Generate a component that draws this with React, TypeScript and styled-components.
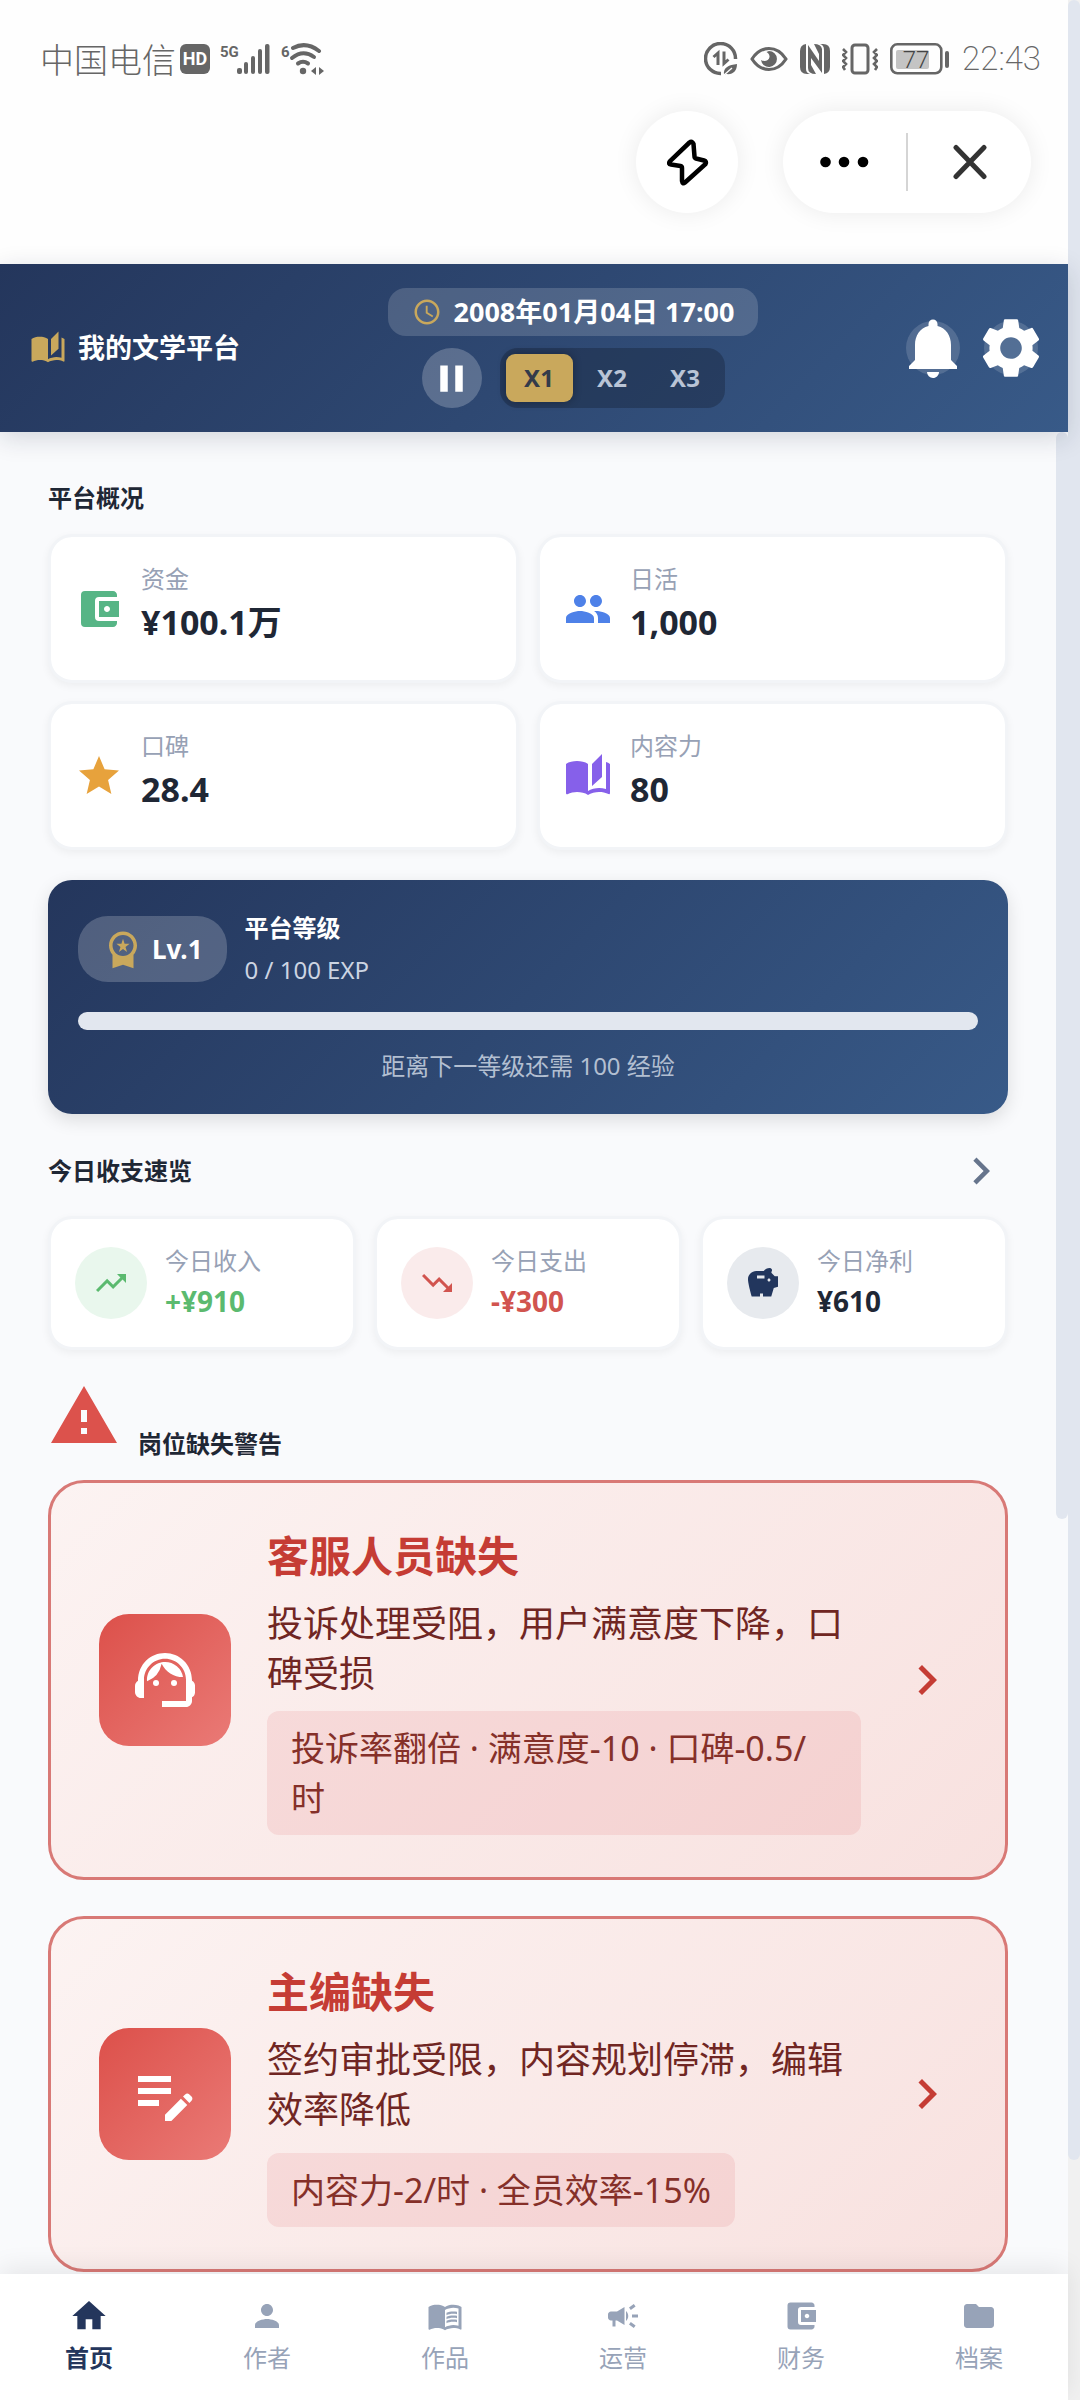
import React, { useState } from "react";
import styled, { createGlobalStyle, css } from "styled-components";
import type { IconType } from "react-icons";
import {
  MdAccountBalanceWallet,
  MdAutoStories,
  MdCampaign,
  MdChevronRight,
  MdEditNote,
  MdFolder,
  MdHome,
  MdMenuBook,
  MdNotifications,
  MdPause,
  MdPeople,
  MdPerson,
  MdPlayArrow,
  MdSavings,
  MdSchedule,
  MdSettings,
  MdStar,
  MdSupportAgent,
  MdTrendingDown,
  MdTrendingUp,
  MdWarning,
  MdWorkspacePremium,
} from "react-icons/md";

const color = {
  navy: "#24365c",
  ink: "#1f2735",
  muted: "#97a1b5",
  gold: "#c9a85c",
  page: "#f9fafc",
  thumb: "#e1e6ef",
  system: "#666666",
  danger: "#c53c34",
};

const navyGradient = "linear-gradient(135deg, #24365c 0%, #385a88 100%)";

const GlobalStyle = createGlobalStyle`
  *, *::before, *::after { box-sizing: border-box; }
  body {
    margin: 0;
    background: ${color.page};
    color: ${color.ink};
    font-family: "Noto Sans", "Noto Sans CJK SC", sans-serif;
    font-size: 24px;
    line-height: 36px;
  }
  h1, h2, h3, p, ul { margin: 0; padding: 0; }
  ul { list-style: none; }
  button { font: inherit; color: inherit; border: 0; padding: 0; background: none; cursor: pointer; }
  svg { display: block; flex: none; }
`;

/* ---------- shell ---------- */

const Shell = styled.div`
  display: flex;
  min-height: 100vh;
`;

const Screen = styled.div`
  flex: 1;
  min-width: 0;
  display: flex;
  flex-direction: column;
`;

const Rail = styled.div<{ $track: string }>`
  flex: none;
  width: 12px;
  background: ${(p) => p.$track};
`;

const Thumb = styled.div<{ $share: number }>`
  height: ${(p) => p.$share}%;
  border-radius: 6px;
  background: ${color.thumb};
`;

/* ---------- system area ---------- */

const SystemArea = styled.div`
  background: #fefefe;
  padding: 42px 0 51px;
`;

const StatusBar = styled.div`
  display: flex;
  justify-content: space-between;
  height: 34px;
  padding: 0 27px 0 40px;
  color: ${color.system};
`;

const StatusGroup = styled.div<{ $gap: number }>`
  display: flex;
  align-items: center;
  gap: ${(p) => p.$gap}px;
`;

const Carrier = styled.span`
  font-family: "Noto Sans CJK SC", sans-serif;
  font-weight: 300;
  font-size: 34px;
  line-height: 34px;
`;

const CarrierGroup = styled.div`
  display: flex;
  align-items: center;
  gap: 4px;
`;

const HdBadge = styled.span`
  width: 30px;
  height: 30px;
  border-radius: 6px;
  background: ${color.system};
  color: #fff;
  font: 700 18px/30px Roboto, sans-serif;
  text-align: center;
`;

const Clock = styled.span`
  font: 200 33px/34px Roboto, sans-serif;
`;

const CapsuleRow = styled.div`
  display: flex;
  justify-content: flex-end;
  gap: 45px;
  margin-top: 35px;
  padding: 0 37px;
`;

const capsule = css`
  height: 102px;
  border-radius: 51px;
  background: #fff;
  box-shadow: 0 0 24px rgba(0, 0, 0, 0.08);
`;

const RoundCapsule = styled.button`
  ${capsule}
  width: 102px;
  display: grid;
  place-items: center;
`;

const WideCapsule = styled.div`
  ${capsule}
  display: flex;
  align-items: center;
`;

const CapsuleButton = styled.button`
  width: 123px;
  height: 102px;
  display: grid;
  place-items: center;
`;

const CapsuleDivider = styled.span`
  width: 2px;
  height: 58px;
  background: #d5d5d5;
`;

/* ---------- app header ---------- */

const Header = styled.header`
  position: relative;
  z-index: 1;
  display: flex;
  align-items: center;
  justify-content: space-between;
  padding: 24px 30px;
  background: ${navyGradient};
  box-shadow: 0 6px 24px rgba(20, 30, 55, 0.16);
  color: #fff;
`;

const Brand = styled.div`
  display: flex;
  align-items: center;
  gap: 12px;
  svg { color: ${color.gold}; }
`;

const BrandName = styled.h1`
  font-size: 27px;
  line-height: 36px;
  font-weight: 700;
`;

const TimeColumn = styled.div`
  display: flex;
  flex-direction: column;
  align-items: center;
  gap: 12px;
`;

const DatePill = styled.div`
  display: flex;
  align-items: center;
  gap: 12px;
  height: 48px;
  padding: 0 24px;
  border-radius: 18px;
  background: rgba(255, 255, 255, 0.16);
  font-size: 27px;
  font-weight: 700;
  svg { color: ${color.gold}; }
`;

const Controls = styled.div`
  display: flex;
  gap: 18px;
`;

const PauseButton = styled.button`
  width: 60px;
  height: 60px;
  border-radius: 50%;
  background: rgba(255, 255, 255, 0.22);
  display: grid;
  place-items: center;
`;

const SpeedGroup = styled.div`
  display: flex;
  gap: 6px;
  padding: 6px;
  border-radius: 18px;
  background: rgba(20, 30, 50, 0.36);
`;

const SpeedButton = styled.button<{ $active: boolean }>`
  width: 67px;
  height: 48px;
  border-radius: 9px;
  font-weight: 700;
  color: ${(p) => (p.$active ? "#333b4a" : "#b9c4d6")};
  background: ${(p) => (p.$active ? color.gold : "transparent")};
  box-shadow: ${(p) => (p.$active ? "0 0 8px rgba(0, 0, 0, 0.3)" : "none")};
`;

const HeaderActions = styled.div`
  display: flex;
  gap: 24px;
`;

const ActionButton = styled.button`
  width: 54px;
  height: 54px;
  border-radius: 50%;
  background: rgba(255, 255, 255, 0.15);
  display: flex;
  align-items: center;
  justify-content: center;
`;

/* ---------- dashboard ---------- */

const Body = styled.div`
  flex: 1;
  display: flex;
`;

const Main = styled.main`
  flex: 1;
  min-width: 0;
  display: flex;
  flex-direction: column;
  gap: 30px;
  padding: 48px 48px 0;
`;

const Section = styled.section`
  display: flex;
  flex-direction: column;
  gap: 18px;
`;

const SectionHead = styled.div`
  display: flex;
  align-items: center;
  justify-content: space-between;
`;

const SectionTitle = styled.h2`
  font-size: 24px;
  line-height: 36px;
  font-weight: 700;
`;

const WarningHead = styled.div`
  display: flex;
  align-items: flex-end;
  gap: 18px;
  svg { color: #dc524c; margin-bottom: 10px; }
`;

const MoreButton = styled.button`
  color: #66748c;
`;

const CardGrid = styled.div<{ $columns: number }>`
  display: grid;
  grid-template-columns: repeat(${(p) => p.$columns}, minmax(0, 1fr));
  gap: 18px;
`;

const Card = styled.div`
  display: flex;
  align-items: center;
  gap: 18px;
  padding: 24px;
  border: 3px solid #f2f4f7;
  border-radius: 24px;
  background: #fff;
  background-clip: padding-box;
  box-shadow: 0 3px 9px rgba(0, 0, 0, 0.05);
`;

const StatIcon = styled.span<{ $color: string }>`
  color: ${(p) => p.$color};
`;

const StatText = styled.div`
  padding-bottom: 9px;
`;

const Label = styled.p`
  color: ${color.muted};
`;

const StatValue = styled.p`
  font-size: 34px;
  line-height: 50px;
  font-weight: 700;
`;

const FlowIcon = styled.span<{ $color: string; $bg: string }>`
  flex: none;
  width: 72px;
  height: 72px;
  border-radius: 50%;
  display: grid;
  place-items: center;
  color: ${(p) => p.$color};
  background: ${(p) => p.$bg};
`;

const FlowValue = styled.p<{ $color: string }>`
  font-size: 28px;
  line-height: 44px;
  font-weight: 700;
  color: ${(p) => p.$color};
`;

const LevelCard = styled.section`
  padding: 30px;
  border-radius: 24px;
  background: ${navyGradient};
  box-shadow: 0 6px 18px rgba(0, 0, 0, 0.12);
  color: #fff;
`;

const LevelTop = styled.div`
  display: flex;
  align-items: center;
  gap: 18px;
`;

const LevelBadge = styled.div`
  display: flex;
  align-items: center;
  gap: 8px;
  height: 66px;
  padding: 0 24px;
  border-radius: 30px;
  background: rgba(255, 255, 255, 0.2);
  font-size: 26px;
  font-weight: 700;
  svg { color: ${color.gold}; }
`;

const LevelInfo = styled.div`
  display: flex;
  flex-direction: column;
  gap: 6px;
`;

const Exp = styled.p`
  color: #ccd4e2;
`;

const ProgressTrack = styled.div`
  height: 18px;
  margin: 24px 0 18px;
  border-radius: 9px;
  background: #e2e7ef;
  overflow: hidden;
`;

const ProgressFill = styled.div`
  height: 100%;
  background: ${color.gold};
`;

const LevelHint = styled.p`
  text-align: center;
  color: #b3bfd1;
`;

/* ---------- alerts ---------- */

const AlertList = styled.div`
  display: flex;
  flex-direction: column;
  gap: 36px;
`;

const Alert = styled.article`
  display: flex;
  align-items: center;
  gap: 36px;
  padding: 48px;
  border: 3px solid #d87976;
  border-radius: 36px;
  background: linear-gradient(135deg, #fcf3f2 0%, #f8e1df 100%);
`;

const AlertTile = styled.span`
  flex: none;
  width: 132px;
  height: 132px;
  border-radius: 30px;
  background: linear-gradient(135deg, #dc504a 0%, #ea7a76 100%);
  color: #fff;
  display: grid;
  place-items: center;
`;

const AlertText = styled.div`
  flex: 1;
  min-width: 0;
  margin-bottom: -6px;
`;

const AlertTitle = styled.h3`
  font-size: 42px;
  line-height: 50px;
  font-weight: 700;
  color: ${color.danger};
  margin-bottom: 18px;
`;

const AlertDescription = styled.p`
  font-size: 36px;
  line-height: 50px;
  color: #702623;
`;

const AlertEffect = styled.p<{ $gap: number }>`
  width: fit-content;
  margin-top: ${(p) => p.$gap}px;
  padding: 12px 24px;
  border-radius: 12px;
  background: rgba(220, 80, 90, 0.12);
  font-size: 34px;
  line-height: 50px;
  color: #853029;
`;

const AlertMore = styled.button`
  color: ${color.danger};
`;

/* ---------- bottom navigation ---------- */

const BottomNav = styled.nav`
  position: relative;
  z-index: 1;
  background: #fff;
  box-shadow: 0 -6px 24px rgba(0, 0, 0, 0.08);
`;

const NavList = styled.ul`
  display: grid;
  grid-template-columns: repeat(6, 1fr);
`;

const NavLink = styled.a<{ $active: boolean }>`
  display: flex;
  flex-direction: column;
  align-items: center;
  gap: 6px;
  padding: 24px 0;
  text-decoration: none;
  color: ${(p) => (p.$active ? color.navy : "#97a3b8")};
  font-weight: ${(p) => (p.$active ? 700 : 400)};
`;

const NavIcon = styled.span`
  height: 36px;
  display: flex;
  align-items: center;
`;

/* ---------- drawings ---------- */

const CellularIcon = () => (
  <svg width="50" height="32" viewBox="0 0 50 32" fill="currentColor">
    <text x="0" y="14" fontFamily="Roboto, sans-serif" fontWeight="700" fontSize="15">5G</text>
    <rect x="17" y="25" width="5" height="6" rx="2" />
    <rect x="24" y="19" width="4" height="12" rx="2" />
    <rect x="31" y="13" width="4" height="18" rx="2" />
    <rect x="38" y="6" width="4" height="25" rx="2" />
    <rect x="45" y="1" width="4.5" height="30" rx="2" />
  </svg>
);

const WifiIcon = () => (
  <svg width="46" height="34" viewBox="0 0 46 34" fill="none" stroke="currentColor" strokeWidth="4" strokeLinecap="round">
    <text x="1" y="15" fontFamily="Roboto, sans-serif" fontWeight="700" fontSize="15" fill="currentColor" stroke="none">6</text>
    <path d="M13 6 Q26 -1 39 9" />
    <path d="M12 16 Q23 7 34 15" />
    <path d="M18 21.500 Q23 18 28 21.500" />
    <circle cx="23" cy="29" r="3.200" fill="currentColor" stroke="none" />
    <path d="M36 25v8l-5-4zM39 25v8l5-4z" fill="currentColor" stroke="none" />
  </svg>
);

const DataSaverIcon = () => (
  <svg width="34" height="34" viewBox="0 0 34 34" fill="none" stroke="currentColor" strokeWidth="3.500">
    <path d="M17 31.500A15 15 0 1 1 31.500 17" />
    <path d="M9.500 15l4.500-4v12M20 9.500v12l4.500-4" strokeWidth="3" />
    <path d="M20 33c-1-8 5-10 13-11 0 7-4 11-11 10z" fill="currentColor" stroke="none" />
    <path d="M20 33l8-7" stroke="#fff" strokeWidth="1.300" />
  </svg>
);

const EyeIcon = () => (
  <svg width="38" height="26" viewBox="0 0 38 26">
    <path d="M2 13C11-1 27-1 36 13 27 27 11 27 2 13z" fill="none" stroke="currentColor" strokeWidth="3.200" strokeLinejoin="round" />
    <path d="M19 5a8 8 0 1 1-8 9c3 2 8 1 8.500-3 .2-2.500-1.500-4-3-5z" fill="currentColor" />
  </svg>
);

const NfcIcon = () => (
  <svg width="30" height="30" viewBox="0 0 30 30" fill="currentColor">
    <path d="M6 0v25q0 4 4 5H7q-7 0-7-7V7Q0 1 6 0z" />
    <path d="M24 30V6q0-5-4-6h3q7 0 7 7v16q0 6-6 7z" />
    <path d="M8 1l11 16V10l-5-10q7 0 8 5v24L11 14v7l5 9q-8 0-8-6z" />
  </svg>
);

const VibrateIcon = () => (
  <svg width="36" height="32" viewBox="0 0 36 32" fill="none" stroke="currentColor" strokeWidth="3">
    <rect x="10" y="2" width="16" height="28" rx="3" />
    <path d="M1 6l3 3-3 3 3 3-3 3 3 3-3 3 2 3M35 6l-3 3 3 3-3 3 3 3-3 3 3 3-2 3" strokeWidth="2.600" />
  </svg>
);

const BatteryIcon = () => (
  <svg width="60" height="32" viewBox="0 0 60 32">
    <rect x="1.300" y="1.300" width="50" height="29" rx="6" fill="none" stroke="currentColor" strokeWidth="2.600" />
    <rect x="6" y="7" width="33" height="19" rx="2" fill="#c4c4c4" />
    <rect x="55" y="8" width="4" height="17" rx="2" fill="currentColor" />
    <text x="26" y="25" textAnchor="middle" fontFamily="Roboto, sans-serif" fontWeight="300" fontSize="24" fill="#444">77</text>
  </svg>
);

const FlashIcon = () => (
  <svg width="44" height="50" viewBox="0 0 44 50" fill="none" stroke="#000" strokeWidth="4.500" strokeLinejoin="round">
    <path d="M24.500 5.500 4.800 24.300Q2.800 27 6 27.500L15.500 29Q17 29.300 17 31L17 44Q17.500 47.500 20 45.500L40.500 27Q42 24.500 39 23.500L31 21.500Q29.500 21 29.500 19.500L28.500 7Q27 3.500 24.500 5.500z" />
  </svg>
);

const DotsIcon = () => (
  <svg width="50" height="12" viewBox="0 0 50 12">
    <circle cx="5.500" cy="6" r="5.300" />
    <circle cx="24" cy="6" r="5.300" />
    <circle cx="43" cy="6" r="5.300" />
  </svg>
);

const CloseIcon = () => (
  <svg width="34" height="36" viewBox="0 0 34 36" fill="none" stroke="#333" strokeWidth="5" strokeLinecap="round">
    <path d="M3 3.500l28 29M31 3.500l-28 29" />
  </svg>
);

/* ---------- data ---------- */

const stats: { label: string; value: string; icon: IconType; tint: string }[] = [
  { label: "资金", value: "¥100.1万", icon: MdAccountBalanceWallet, tint: "#57b586" },
  { label: "日活", value: "1,000", icon: MdPeople, tint: "#4e81e8" },
  { label: "口碑", value: "28.4", icon: MdStar, tint: "#e7a23c" },
  { label: "内容力", value: "80", icon: MdAutoStories, tint: "#8660ea" },
];

const flows: { label: string; value: string; icon: IconType; tint: string; bg: string; text: string }[] = [
  { label: "今日收入", value: "+¥910", icon: MdTrendingUp, tint: "#5bba6f", bg: "#e9f7ed", text: "#5bba6f" },
  { label: "今日支出", value: "-¥300", icon: MdTrendingDown, tint: "#d1544f", bg: "#faebeb", text: "#d1544f" },
  { label: "今日净利", value: "¥610", icon: MdSavings, tint: "#22365d", bg: "#e7eaee", text: color.ink },
];

const alerts: { title: string; description: string; effect: string; icon: IconType; gap: number }[] = [
  {
    title: "客服人员缺失",
    description: "投诉处理受阻，用户满意度下降，口碑受损",
    effect: "投诉率翻倍 · 满意度-10 · 口碑-0.5/时",
    icon: MdSupportAgent,
    gap: 12,
  },
  {
    title: "主编缺失",
    description: "签约审批受限，内容规划停滞，编辑效率降低",
    effect: "内容力-2/时 · 全员效率-15%",
    icon: MdEditNote,
    gap: 18,
  },
];

const tabs: { label: string; icon: IconType }[] = [
  { label: "首页", icon: MdHome },
  { label: "作者", icon: MdPerson },
  { label: "作品", icon: MdMenuBook },
  { label: "运营", icon: MdCampaign },
  { label: "财务", icon: MdAccountBalanceWallet },
  { label: "档案", icon: MdFolder },
];

/* ---------- page ---------- */

export default function App() {
  const [speed, setSpeed] = useState("X1");
  const [running, setRunning] = useState(true);
  const [tab, setTab] = useState("首页");
  const exp = 0;
  const goal = 100;

  return (
    <>
      <GlobalStyle />
      <Shell>
        <Screen>
          <SystemArea>
            <StatusBar>
              <StatusGroup $gap={10}>
                <CarrierGroup>
                  <Carrier>中国电信</Carrier>
                  <HdBadge>HD</HdBadge>
                </CarrierGroup>
                <CellularIcon />
                <WifiIcon />
              </StatusGroup>
              <StatusGroup $gap={12}>
                <DataSaverIcon />
                <EyeIcon />
                <NfcIcon />
                <VibrateIcon />
                <BatteryIcon />
                <Clock>22:43</Clock>
              </StatusGroup>
            </StatusBar>
            <CapsuleRow>
              <RoundCapsule aria-label="快捷">
                <FlashIcon />
              </RoundCapsule>
              <WideCapsule>
                <CapsuleButton aria-label="更多">
                  <DotsIcon />
                </CapsuleButton>
                <CapsuleDivider />
                <CapsuleButton aria-label="关闭">
                  <CloseIcon />
                </CapsuleButton>
              </WideCapsule>
            </CapsuleRow>
          </SystemArea>

          <Header>
            <Brand>
              <MdAutoStories size={36} />
              <BrandName>我的文学平台</BrandName>
            </Brand>
            <TimeColumn>
              <DatePill>
                <MdSchedule size={30} />
                <span>2008年01月04日 17:00</span>
              </DatePill>
              <Controls>
                <PauseButton aria-label={running ? "暂停" : "继续"} onClick={() => setRunning(!running)}>
                  {running ? <MdPause size={45} /> : <MdPlayArrow size={45} />}
                </PauseButton>
                <SpeedGroup>
                  {["X1", "X2", "X3"].map((s) => (
                    <SpeedButton key={s} $active={s === speed} aria-pressed={s === speed} onClick={() => setSpeed(s)}>
                      {s}
                    </SpeedButton>
                  ))}
                </SpeedGroup>
              </Controls>
            </TimeColumn>
            <HeaderActions>
              <ActionButton aria-label="通知">
                <MdNotifications size={72} />
              </ActionButton>
              <ActionButton aria-label="设置">
                <MdSettings size={72} />
              </ActionButton>
            </HeaderActions>
          </Header>

          <Body>
            <Main>
              <Section>
                <SectionTitle>平台概况</SectionTitle>
                <CardGrid $columns={2}>
                  {stats.map(({ label, value, icon: Icon, tint }) => (
                    <Card key={label}>
                      <StatIcon $color={tint}>
                        <Icon size={48} />
                      </StatIcon>
                      <StatText>
                        <Label>{label}</Label>
                        <StatValue>{value}</StatValue>
                      </StatText>
                    </Card>
                  ))}
                </CardGrid>
              </Section>

              <LevelCard>
                <LevelTop>
                  <LevelBadge>
                    <MdWorkspacePremium size={42} />
                    <span>Lv.1</span>
                  </LevelBadge>
                  <LevelInfo>
                    <SectionTitle>平台等级</SectionTitle>
                    <Exp>{exp} / {goal} EXP</Exp>
                  </LevelInfo>
                </LevelTop>
                <ProgressTrack role="progressbar" aria-valuenow={exp} aria-valuemax={goal} aria-label="平台等级">
                  <ProgressFill style={{ width: `${(exp / goal) * 100}%` }} />
                </ProgressTrack>
                <LevelHint>距离下一等级还需 {goal - exp} 经验</LevelHint>
              </LevelCard>

              <Section>
                <SectionHead>
                  <SectionTitle>今日收支速览</SectionTitle>
                  <MoreButton aria-label="查看收支">
                    <MdChevronRight size={54} />
                  </MoreButton>
                </SectionHead>
                <CardGrid $columns={3}>
                  {flows.map(({ label, value, icon: Icon, tint, bg, text }) => (
                    <Card key={label}>
                      <FlowIcon $color={tint} $bg={bg}>
                        <Icon size={36} />
                      </FlowIcon>
                      <div>
                        <Label>{label}</Label>
                        <FlowValue $color={text}>{value}</FlowValue>
                      </div>
                    </Card>
                  ))}
                </CardGrid>
              </Section>

              <Section>
                <WarningHead>
                  <MdWarning size={72} />
                  <SectionTitle>岗位缺失警告</SectionTitle>
                </WarningHead>
                <AlertList>
                  {alerts.map(({ title, description, effect, icon: Icon, gap }) => (
                    <Alert key={title}>
                      <AlertTile>
                        <Icon size={72} />
                      </AlertTile>
                      <AlertText>
                        <AlertTitle>{title}</AlertTitle>
                        <AlertDescription>{description}</AlertDescription>
                        <AlertEffect $gap={gap}>{effect}</AlertEffect>
                      </AlertText>
                      <AlertMore aria-label={title}>
                        <MdChevronRight size={60} />
                      </AlertMore>
                    </Alert>
                  ))}
                </AlertList>
              </Section>
            </Main>
            <Rail $track={color.page}>
              <Thumb $share={59} />
            </Rail>
          </Body>

          <BottomNav>
            <NavList>
              {tabs.map(({ label, icon: Icon }) => (
                <li key={label}>
                  <NavLink href={`#${label}`} $active={label === tab} onClick={() => setTab(label)}>
                    <NavIcon>
                      <Icon size={label === tab ? 40 : 36} />
                    </NavIcon>
                    {label}
                  </NavLink>
                </li>
              ))}
            </NavList>
          </BottomNav>
        </Screen>
        <Rail $track="#f1f1f1">
          <Thumb $share={90} />
        </Rail>
      </Shell>
    </>
  );
}
